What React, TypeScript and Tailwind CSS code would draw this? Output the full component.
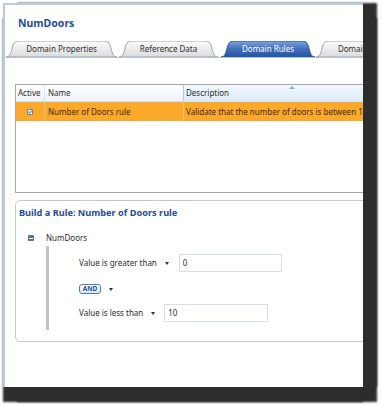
import React from "react";

function tabPath(w: number) {
  return `M0 16 C3 16 4 14 5 11 L7 4 C8 1.2 10 0 13 0 L${w - 13} 0 C${w - 10} 0 ${w - 8} 1.2 ${w - 7} 4 L${w - 5} 11 C${w - 4} 14 ${w - 3} 16 ${w} 16 Z`;
}

function Tab({ w, cls, label, active, id }: { w: number; cls: string; label: string; active?: boolean; id: string }) {
  return (
    <div className={`relative h-[16px] shrink-0 flex items-center justify-center ${cls}`}>
      <svg className="absolute inset-0" width={w} height={16} viewBox={`0 0 ${w} 16`}>
        <defs>
          <linearGradient id={id} x1="0" y1="0" x2="0" y2="1">
            {active ? (
              <>
                <stop offset="0" stopColor="#7ea3dc" />
                <stop offset="0.5" stopColor="#3f6fbd" />
                <stop offset="1" stopColor="#25539f" />
              </>
            ) : (
              <>
                <stop offset="0" stopColor="#fbfbfb" />
                <stop offset="1" stopColor="#dcdcdc" />
              </>
            )}
          </linearGradient>
        </defs>
        <path d={tabPath(w)} fill={`url(#${id})`} stroke={active ? "#2c5aa2" : "#a5a5a5"} strokeWidth="1" />
      </svg>
      <span className={`relative text-[8px] leading-none ${active ? "text-white" : "text-[#2e2e2e]"}`}>{label}</span>
    </div>
  );
}

function Arrow() {
  return <div className="w-0 h-0 border-l-[2px] border-r-[2px] border-t-[3px] border-l-transparent border-r-transparent border-t-[#333]" />;
}

export default function App() {
  return (
    <div className="w-[382px] h-[405px] bg-white pl-[3px] pt-[3px] font-['Noto_Sans','Open_Sans',sans-serif] text-[#2b2b2b]">
      <div className="w-[360px] h-[384px] bg-white border-l-2 border-t-2 border-[#b4cbe6] shadow-[14px_0_2px_#2d2d2d,0_15px_2px_#2d2d2d,14px_15px_2px_#2d2d2d] overflow-hidden flex flex-col">
        <div className="mt-[12px] pl-[13px] h-[14px] flex items-center text-[10.5px] font-bold text-[#1f4c97]">NumDoors</div>
        <div className="mt-[10px] ml-[1px] flex items-end h-[16px]">
          <Tab id="t1" w={111} cls="w-[111px]" label="Domain Properties" />
          <div className="w-[2px] shrink-0" />
          <Tab id="t2" w={99} cls="w-[99px]" label="Reference Data" />
          <div className="w-[3px] shrink-0" />
          <Tab id="t3" w={94} cls="w-[94px]" label="Domain Rules" active />
          <div className="w-[1px] shrink-0" />
          <Tab id="t4" w={100} cls="w-[100px]" label="Domain Values" />
        </div>
        <div className="h-[1px] w-full bg-[#a9c4e5]" />

        <div className="ml-[10px] mt-[26px] w-[360px] h-[109px] border border-r-0 border-[#a6a6a6] bg-white shrink-0">
          <div className="flex h-[17px] border-b border-[#d9e3ec] text-[8px]">
            <div className="w-[29px] shrink-0 border-r border-[#dde2e8] bg-gradient-to-b from-white to-[#eef1f5] pl-[2px] flex items-center">Active</div>
            <div className="w-[139px] shrink-0 border-r border-[#a9cbe8] bg-gradient-to-b from-white to-[#eef1f5] pl-[3px] flex items-center">Name</div>
            <div className="flex-1 relative bg-gradient-to-b from-[#f2f8fd] to-[#dcebf8] pl-[2px] flex items-center">
              Description
              <div className="absolute top-[1px] left-[105px] w-0 h-0 border-l-[3px] border-r-[3px] border-b-[3px] border-l-transparent border-r-transparent border-b-[#8fa6c0]" />
            </div>
          </div>
          <div className="flex h-[19px] bg-[#fca92b] text-[8px] text-[#3a2a10]">
            <div className="w-[29px] shrink-0 border-r border-[#f5c57a] flex items-center justify-center">
              <div className="w-[6px] h-[6px] border border-[#7b8a9a] bg-[#e9eef5] flex items-center justify-center">
                <svg width="4" height="4" viewBox="0 0 4 4"><path d="M0.4 2 L1.6 3.2 L3.6 0.6" stroke="#2f5ea8" strokeWidth="1" fill="none" /></svg>
              </div>
            </div>
            <div className="w-[139px] shrink-0 border-r border-[#f5c57a] pl-[3px] flex items-center">Number of Doors rule</div>
            <div className="flex-1 pl-[2px] flex items-center whitespace-nowrap">Validate that the number of doors is between 1 and 10</div>
          </div>
        </div>

        <div className="ml-[10px] mt-[7px] w-[370px] h-[142px] border border-[#c9c9c9] rounded-[5px] shrink-0 flex flex-col">
          <div className="mt-[6px] pl-[3px] h-[12px] flex items-center text-[9.2px] font-bold text-[#1f4c97]">Build a Rule: Number of Doors rule</div>
          <div className="mt-[13px] flex items-center h-[12px]">
            <div className="ml-[12px] w-[6px] h-[6px] rounded-[1px] bg-[#5c7594] flex items-center justify-center">
              <div className="w-[4px] h-[1px] bg-white" />
            </div>
            <div className="ml-[12px] text-[8px]">NumDoors</div>
          </div>
          <div className="ml-[30px] mt-[2px] w-[300px] border-l-[3px] border-[#c3c3c3] pt-[8px] pb-[8px] pl-[30px] flex flex-col text-[8px]">
            <div className="flex items-center h-[18px] gap-[8px]">
              <span>Value is greater than</span>
              <Arrow />
              <div className="ml-[2px] w-[103px] h-[18px] border border-[#d6dee6] bg-white pl-[3px] flex items-center">0</div>
            </div>
            <div className="mt-[12px] flex items-center h-[10px] gap-[8px]">
              <div className="w-[22px] h-[10px] rounded-[3px] border border-[#4f78b8] bg-gradient-to-b from-white to-[#dde8f6] flex items-center justify-center text-[6.5px] font-bold text-[#2a549e] leading-none">AND</div>
              <Arrow />
            </div>
            <div className="mt-[10px] flex items-center h-[18px] gap-[8px]">
              <span>Value is less than</span>
              <Arrow />
              <div className="ml-[1px] w-[104px] h-[18px] border border-[#d6dee6] bg-white pl-[3px] flex items-center">10</div>
            </div>
          </div>
        </div>
      </div>
    </div>
  );
}
